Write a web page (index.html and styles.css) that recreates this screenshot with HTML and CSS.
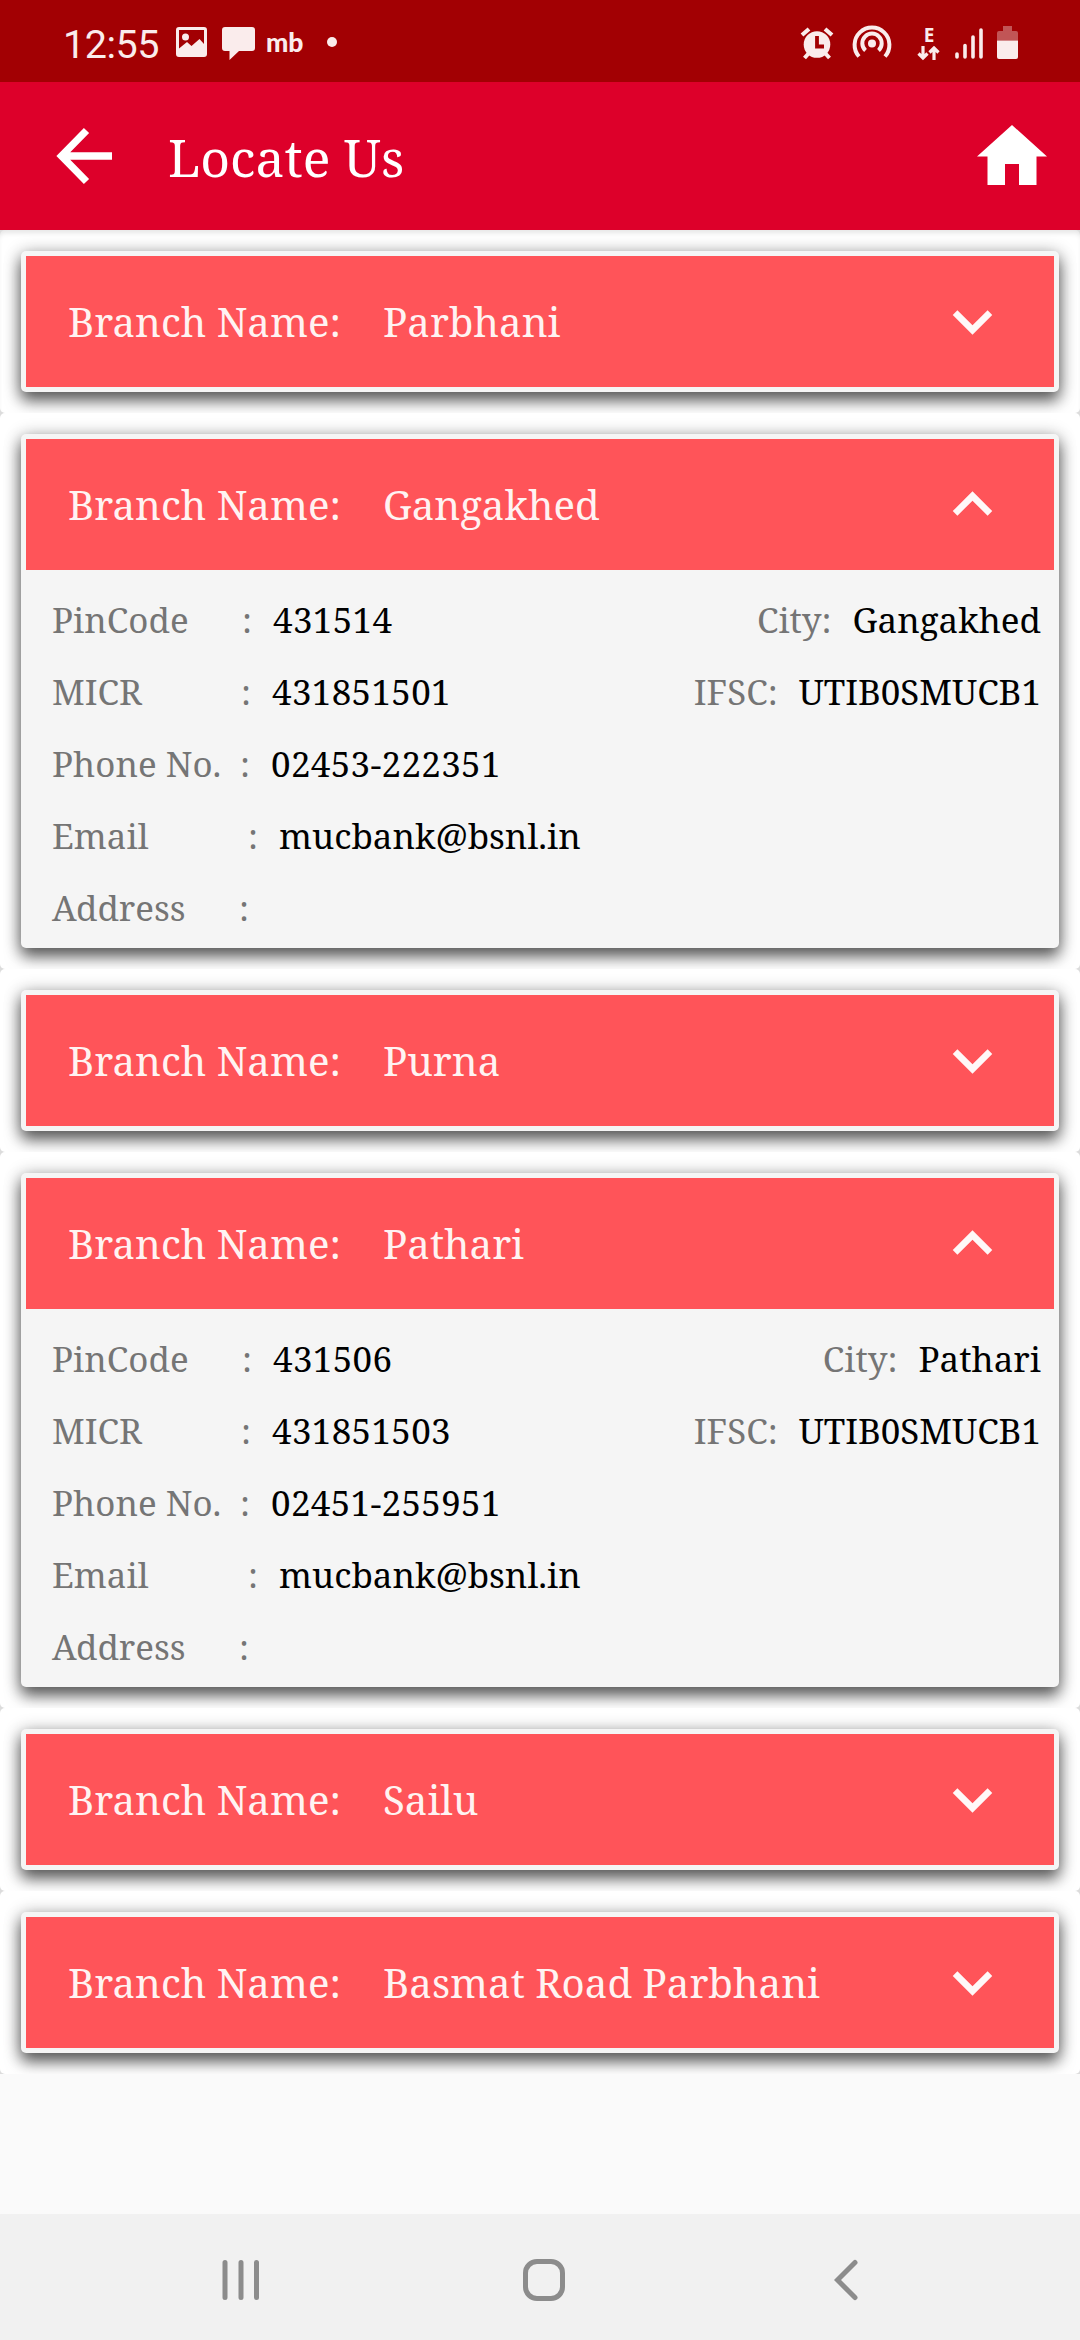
FILE: index.html
```html
<!DOCTYPE html>
<html lang="en">
<head>
<meta charset="utf-8">
<title>Locate Us</title>
<link rel="stylesheet" href="styles.css">
</head>
<body>
<svg class="defs" aria-hidden="true">
  <symbol id="down" viewBox="0 0 24 24"><path d="M7.41 8.59 12 13.17l4.59-4.58L18 10l-6 6-6-6z"/></symbol>
  <symbol id="up" viewBox="0 0 24 24"><path d="M12 8l-6 6 1.41 1.41L12 10.83l4.59 4.58L18 14z"/></symbol>
</svg>
<div class="screen">
  <div class="status">
    <span class="time">12:55</span>
    <svg class="image-icon" width="31" height="31" viewBox="0 0 31 31"><path fill-rule="evenodd" d="M3 0h25a3 3 0 0 1 3 3v24a3 3 0 0 1-3 3H3a3 3 0 0 1-3-3V3a3 3 0 0 1 3-3zM3 3v18.500l8-6.500 4.500 4 8-7 4.500 5V3zM9.500 6.500a3.500 3.500 0 1 1 0 7 3.500 3.500 0 0 1 0-7z"/></svg>
    <svg class="chat-icon" width="34" height="34" viewBox="0 0 34 34"><path d="M3 0h27a3 3 0 0 1 3 3v18a3 3 0 0 1-3 3H17l-9.500 9V24H3a3 3 0 0 1-3-3V3a3 3 0 0 1 3-3z"/></svg>
    <span class="mb">mb</span>
    <span class="dot"></span>
    <svg class="alarm-icon" width="34" height="33" viewBox="0 0 34 33"><path d="M2 8l7-6M32 8l-7-6" stroke-width="4.200"/><path d="M9 26l-4.500 5M25 26l4.500 5" stroke-width="4"/><circle cx="17" cy="17.500" r="13.300"/><path class="hands" d="M17 9v10.500h7" stroke-width="3.800"/></svg>
    <svg class="cast-icon" width="40" height="36" viewBox="0 0 40 36"><circle cx="20" cy="19.500" r="4"/><path class="line" d="M7 32.500A17.400 17.400 0 1 1 33 32.500M13.500 26.500A9.700 9.700 0 1 1 26.500 26.500" stroke-width="4"/></svg>
    <span class="data"><b>E</b><svg width="24" height="15" viewBox="0 0 24 15"><path class="line" d="M6 0v12M1.500 7.500 6 12l4.500-4.500M17 14V2M12.500 6.500 17 2l4.500 4.500" stroke-width="3.200"/></svg></span>
    <svg class="signal-icon" width="29" height="31" viewBox="0 0 29 31"><path d="M2 26v3M10 17.500V29M18 9v20M26 2v27" stroke-width="3.600" stroke-linecap="round"/></svg>
    <svg class="battery-icon" width="22" height="34" viewBox="0 0 22 34"><path opacity=".36" d="M7 0h8v5h4a2 2 0 0 1 2 2v7.500H0V7a2 2 0 0 1 2-2h4V0z"/><path d="M0 14.500h21V31a2 2 0 0 1-2 2H2a2 2 0 0 1-2-2z"/></svg>
  </div>
  <header class="appbar">
    <svg width="58" height="58" viewBox="0 0 58 58"><path d="M31.500 3.500 6.500 29l25 25.500M6.500 29H57" fill="none" stroke="#fff" stroke-width="7.300"/></svg>
    <h1>Locate Us</h1>
    <svg class="home-icon" width="70" height="60" viewBox="0 0 70 60"><path fill="#fff" d="M35 0l35 31.500H59.500V60H42V39H28v21H10.500V31.500H0z"/></svg>
  </header>
  <main class="list">
   <div class="items">
    <div class="item"><section class="card">
      <div class="head"><span class="label">Branch Name:</span><span class="name">Parbhani</span><svg class="chev"><use href="#down"/></svg></div>
    </section></div>
    <div class="item"><section class="card open">
      <div class="head"><span class="label">Branch Name:</span><span class="name">Gangakhed</span><svg class="chev"><use href="#up"/></svg></div>
      <div class="details">
        <div class="row pin"><span class="key">PinCode</span><i>:</i><span class="num">431514</span><span class="key2">City:</span><span class="val">Gangakhed</span></div>
        <div class="row micr"><span class="key">MICR</span><i>:</i><span class="num">431851501</span><span class="key2">IFSC:</span><span class="val">UTIB0SMUCB1</span></div>
        <div class="row phone"><span class="key">Phone No.</span><i>:</i><span class="num">02453-222351</span></div>
        <div class="row email"><span class="key">Email</span><i>:</i><span class="mail">mucbank@bsnl.in</span></div>
        <div class="row address"><span class="key">Address</span><i>:</i></div>
      </div>
    </section></div>
    <div class="item"><section class="card">
      <div class="head"><span class="label">Branch Name:</span><span class="name">Purna</span><svg class="chev"><use href="#down"/></svg></div>
    </section></div>
    <div class="item"><section class="card open">
      <div class="head"><span class="label">Branch Name:</span><span class="name">Pathari</span><svg class="chev"><use href="#up"/></svg></div>
      <div class="details">
        <div class="row pin"><span class="key">PinCode</span><i>:</i><span class="num">431506</span><span class="key2">City:</span><span class="val">Pathari</span></div>
        <div class="row micr"><span class="key">MICR</span><i>:</i><span class="num">431851503</span><span class="key2">IFSC:</span><span class="val">UTIB0SMUCB1</span></div>
        <div class="row phone"><span class="key">Phone No.</span><i>:</i><span class="num">02451-255951</span></div>
        <div class="row email"><span class="key">Email</span><i>:</i><span class="mail">mucbank@bsnl.in</span></div>
        <div class="row address"><span class="key">Address</span><i>:</i></div>
      </div>
    </section></div>
    <div class="item"><section class="card">
      <div class="head"><span class="label">Branch Name:</span><span class="name">Sailu</span><svg class="chev"><use href="#down"/></svg></div>
    </section></div>
    <div class="item"><section class="card">
      <div class="head"><span class="label">Branch Name:</span><span class="name">Basmat Road Parbhani</span><svg class="chev"><use href="#down"/></svg></div>
    </section></div>
   </div>
  </main>
  <nav class="navbar">
    <svg width="38" height="42" viewBox="0 0 38 42"><path d="M3 3.500v35M19 3.500v35M34.500 3.500v35" stroke-width="5" stroke-linecap="round"/></svg>
    <svg class="nav-home" width="42" height="42" viewBox="0 0 42 42"><rect x="2.500" y="2.500" width="37" height="37" rx="11.500" stroke-width="5"/></svg>
    <svg width="24" height="42" viewBox="0 0 24 42"><path d="M21 3.500 3.500 21 21 38.500" stroke-width="5" stroke-linecap="round"/></svg>
  </nav>
</div>
</body>
</html>
```
FILE: styles.css
```css
* { box-sizing: border-box; }
body { margin: 0; background: #fafafa; }
.defs { display: none; }
svg { display: block; flex: none; }

.screen {
  display: flex;
  flex-direction: column;
  width: 1080px;
  height: 2340px;
  overflow: hidden;
  font-family: "Noto Serif", "DejaVu Serif Condensed", serif;
}

/* status bar */
.status {
  display: flex;
  align-items: flex-start;
  height: 82px;
  padding-left: 63px;
  background: #a20003;
  color: #faecec;
}
.status svg { fill: #faecec; stroke: none; }
.status svg path[stroke-width] { stroke: #faecec; fill: none; }
.status svg path.hands[stroke-width] { stroke: #a20003; }
.time { width: 113px; margin-top: 22px; font: 39.500px/46px Roboto, sans-serif; letter-spacing: -0.5px; }
.image-icon { margin-top: 27px; }
.chat-icon { margin: 27px 0 0 15px; }
.mb { width: 61px; margin: 24px 0 0 10px; font: 900 26.500px/36px Lato, sans-serif; }
.dot { width: 10px; height: 10px; margin-top: 37px; border-radius: 50%; background: #faecec; }
.alarm-icon { margin: 27px 0 0 463px; }
.cast-icon { margin: 24px 0 0 18px; }
.data { display: flex; flex-direction: column; align-items: center; width: 24px; margin: 26px 0 0 25px; }
.data b { height: 20px; font: bold 19px/19px "Open Sans", sans-serif; }
.signal-icon { margin: 28px 0 0 14px; }
.battery-icon { margin: 26px 0 0 13px; }

/* app bar */
.appbar {
  display: flex;
  align-items: center;
  flex: none;
  height: 148px;
  padding: 0 33px 0 55px;
  background: #dd002a;
}
.appbar h1 {
  flex: 1;
  margin: 2px 0 0 55px;
  color: #fff;
  font-weight: 400;
  font-size: 51.700px;
  line-height: 70px;
}
.home-icon { margin-bottom: 3px; }

/* branch list */
.list { flex: 1; }
.items { background: #dcdcdc; }
.item {
  padding: 21px;
  overflow: hidden;
  border-radius: 5px;
  background: #fff;
}
.item:first-child { box-shadow: inset 0 5px 5px -2px rgba(0, 0, 0, .1); }
.card {
  padding: 5px;
  border-radius: 5px;
  background: #f5f5f5;
  box-shadow: 0 9px 15px rgba(0, 0, 0, .55), 0 2px 17px rgba(0, 0, 0, .32);
}
.card.open { height: 514px; }
.head {
  display: flex;
  align-items: center;
  height: 131px;
  padding: 0 42px;
  background: #ff5459;
  color: #fff3f2;
  font-size: 40.200px;
  line-height: 60px;
}
.label { width: 315px; }
.name { flex: 1; }
.chev { width: 79px; height: 79px; fill: #fff8f8; }
.details { padding: 14px 13px 0 26px; font-size: 34.950px; line-height: 72px; }
.row { display: flex; height: 72px; white-space: nowrap; }
.row i { width: 31px; color: #757575; font-style: normal; }
.key, .key2 { color: #757575; }
.key { width: 190px; }
.key2 { margin-left: auto; }
.val { margin-left: 21px; }
.num { letter-spacing: 0.35px; }
.micr .key { width: 189px; }
.phone .key { width: 188px; }
.email .key { width: 196px; }
.address .key { width: 187px; }

/* navigation bar */
.navbar {
  display: flex;
  justify-content: space-between;
  align-items: center;
  flex: none;
  height: 126px;
  padding: 5px 222px 0;
  background: #f1f1f1;
}
.navbar svg { fill: none; stroke: #8c8c8c; }
.nav-home { margin-right: 7px; }
```
